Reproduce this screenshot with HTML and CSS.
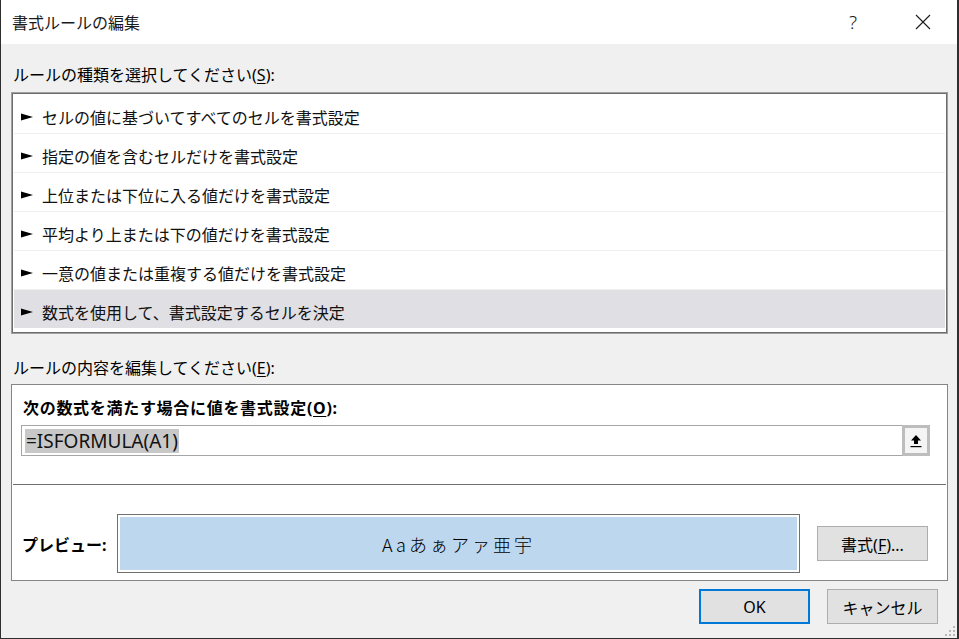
FILE: index.html
```html
<!DOCTYPE html>
<html lang="ja">
<head>
  <meta charset="UTF-8" />
  <meta name="viewport" content="width=device-width, initial-scale=1.0" />
  <title>書式ルールの編集</title>
  <link rel="stylesheet" href="styles.css">
</head>
<body>
  <div class="dialog">
    <!-- caption bar -->
    <header class="titlebar">
      <span class="title">書式ルールの編集</span>
      <span class="help">?</span>
      <svg class="close" width="16" height="16" viewBox="0 0 16 16">
        <path d="M1 1 L15 15 M15 1 L1 15" stroke="#1a1a1a" stroke-width="1.1" fill="none" />
      </svg>
    </header>

    <main class="content">
      <div class="label">ルールの種類を選択してください(<u>S</u>):</div>

      <ul class="rule-list">
        <li class="rule"><svg class="bullet" width="12" height="8" viewBox="0 0 12 8"><path d="M0 0.5 L12 4 L0 7.5 Z" /></svg>セルの値に基づいてすべてのセルを書式設定</li>
        <li class="rule"><svg class="bullet" width="12" height="8" viewBox="0 0 12 8"><path d="M0 0.5 L12 4 L0 7.5 Z" /></svg>指定の値を含むセルだけを書式設定</li>
        <li class="rule"><svg class="bullet" width="12" height="8" viewBox="0 0 12 8"><path d="M0 0.5 L12 4 L0 7.5 Z" /></svg>上位または下位に入る値だけを書式設定</li>
        <li class="rule"><svg class="bullet" width="12" height="8" viewBox="0 0 12 8"><path d="M0 0.5 L12 4 L0 7.5 Z" /></svg>平均より上または下の値だけを書式設定</li>
        <li class="rule"><svg class="bullet" width="12" height="8" viewBox="0 0 12 8"><path d="M0 0.5 L12 4 L0 7.5 Z" /></svg>一意の値または重複する値だけを書式設定</li>
        <li class="rule is-selected"><svg class="bullet" width="12" height="8" viewBox="0 0 12 8"><path d="M0 0.5 L12 4 L0 7.5 Z" /></svg>数式を使用して、書式設定するセルを決定</li>
      </ul>

      <div class="label label-edit">ルールの内容を編集してください(<u>E</u>):</div>

      <section class="rule-desc">
        <div class="desc-title">次の数式を満たす場合に値を書式設定(<u>O</u>):</div>

        <div class="formula">
          <div class="formula-input"><span class="formula-sel">=ISFORMULA(A1)</span></div>
          <button class="collapse" type="button">
            <svg width="12" height="14" viewBox="0 0 12 14">
              <path d="M6 1 L11 6.5 L8 6.5 L8 10 L4 10 L4 6.5 L1 6.5 Z" fill="#000" />
              <rect x="0.5" y="12" width="11" height="1.2" fill="#000" />
            </svg>
          </button>
        </div>

        <hr class="divider">

        <div class="preview-row">
          <span class="preview-label">プレビュー:</span>
          <div class="preview-box"><span class="preview-sample">Aaあぁアァ亜宇</span></div>
          <button class="btn btn-format" type="button">書式(<u>F</u>)...</button>
        </div>
      </section>

      <div class="actions">
        <button class="btn btn-default" type="button">OK</button>
        <button class="btn" type="button">キャンセル</button>
      </div>
    </main>

    <!-- resize grip in the corner -->
    <svg class="grip" width="12" height="12" viewBox="0 0 12 12">
      <rect x="9" y="1" width="2" height="2" fill="#b8b8b8" />
      <rect x="5" y="5" width="2" height="2" fill="#b8b8b8" />
      <rect x="9" y="5" width="2" height="2" fill="#b8b8b8" />
      <rect x="1" y="9" width="2" height="2" fill="#b8b8b8" />
      <rect x="5" y="9" width="2" height="2" fill="#b8b8b8" />
      <rect x="9" y="9" width="2" height="2" fill="#b8b8b8" />
    </svg>
  </div>
</body>
</html>
```

FILE: styles.css
```css
html, body {
  margin: 0;
  background: #2b2b2b;
}

body {
  font-family: "Noto Sans", "Noto Sans CJK JP", sans-serif;
  font-size: 16px;
  color: #000;
}

.dialog {
  position: relative;
  width: 959px;
  height: 639px;
  box-sizing: border-box;
  border: 1px solid #2f2f2f;
  border-top: none;
  border-right-width: 2px;
  background: #f0f0f0;
  display: flex;
  flex-direction: column;
  overflow: hidden;
}

/* caption */
.titlebar {
  height: 44px;
  flex: none;
  background: #fff;
  display: flex;
  align-items: center;
  padding-left: 11px;
}

.title {
  flex: 1;
  font-family: "Noto Sans CJK JP", sans-serif;
  font-size: 16px;
  color: #1a1a1a;
}

.help {
  font-family: "Noto Sans", sans-serif;
  font-size: 19px;
  font-weight: 300;
  color: #1a1a1a;
  margin-right: 58px;
}

.close {
  margin-right: 26px;
}

/* body */
.content {
  flex: 1;
  padding: 19px 9px 0 10px;
  display: flex;
  flex-direction: column;
}

.label {
  height: 24px;
  line-height: 24px;
  padding-left: 2px;
  white-space: nowrap;
}

.label u,
.desc-title u,
.btn u {
  text-underline-offset: 2px;
}

.rule-list {
  list-style: none;
  margin: 5px 0 0 0;
  padding: 2px 2px 3px 2px;
  height: 242px;
  box-sizing: border-box;
  background: #fff;
  border: 1px solid #a0a0a0;
  box-shadow: inset 0 0 0 1px #6d6d6d;
}

.rule {
  height: 39px;
  box-sizing: border-box;
  padding: 5px 0 0 7px;
  display: flex;
  align-items: center;
  border-bottom: 1px solid #f0f0f0;
  white-space: nowrap;
  color: #111;
}

.rule:last-child {
  height: 38px;
  border-bottom: none;
}

.rule.is-selected {
  background: #e0e0e4;
}

.bullet {
  flex: none;
  margin-right: 9px;
  fill: #000;
}

.label-edit {
  margin-top: 22px;
}

/* edit area */
.rule-desc {
  margin-top: 4px;
  height: 197px;
  box-sizing: border-box;
  background: #fff;
  border: 1px solid #858585;
  padding: 11px 17px 0 9px;
  display: flex;
  flex-direction: column;
}

.desc-title {
  height: 24px;
  line-height: 24px;
  font-weight: bold;
  letter-spacing: 0.7px;
  padding-left: 2px;
  white-space: nowrap;
}

.formula {
  margin-top: 5px;
  height: 31px;
  display: flex;
}

.formula-input {
  flex: 1;
  border: 1px solid #a6a6a6;
  border-right: none;
  display: flex;
  align-items: center;
  padding-left: 3px;
}

.formula-sel {
  font-family: "Noto Sans", sans-serif;
  font-size: 19px;
  line-height: 24px;
  background: #c8c8c8;
  color: #111;
  padding: 0 1px;
}

.collapse {
  width: 28px;
  height: 31px;
  box-sizing: border-box;
  margin: 0;
  padding: 0;
  border: 3px solid #bdbdbd;
  background: #f4f4f4;
  display: flex;
  align-items: center;
  justify-content: center;
}

.divider {
  margin: 28px -16px 0 -8px;
  border: none;
  border-top: 1px solid #6e6e6e;
  height: 0;
}

.preview-row {
  margin-top: 29px;
  display: flex;
  align-items: center;
}

.preview-label {
  width: 96px;
  padding-left: 1px;
  box-sizing: border-box;
  font-weight: bold;
  white-space: nowrap;
}

.preview-box {
  width: 683px;
  height: 59px;
  box-sizing: border-box;
  border: 1px solid #707070;
  background: #bdd7ee;
  box-shadow: inset 0 0 0 2px #fff;
  display: flex;
  align-items: center;
  justify-content: center;
}

.preview-sample {
  font-family: "Noto Sans CJK JP", sans-serif;
  font-weight: 300;
  font-size: 18px;
  letter-spacing: 3px;
  color: #000;
}

/* buttons */
.btn {
  width: 111px;
  height: 35px;
  box-sizing: border-box;
  margin: 0;
  padding: 0;
  background: #e1e1e1;
  border: 1px solid #adadad;
  font-family: "Noto Sans", "Noto Sans CJK JP", sans-serif;
  font-size: 16px;
  color: #000;
}

.btn-format {
  margin-left: 17px;
}

.btn-default {
  border: 2px solid #0078d7;
}

.actions {
  margin-top: 8px;
  margin-right: 10px;
  display: flex;
  justify-content: flex-end;
  gap: 17px;
}

.grip {
  position: absolute;
  right: 1px;
  bottom: 1px;
}
```
